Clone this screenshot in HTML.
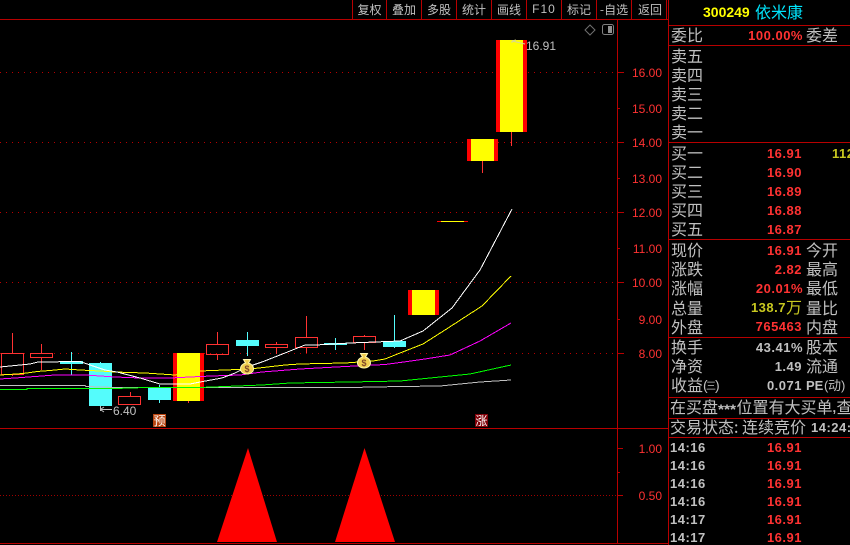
<!DOCTYPE html>
<html><head><meta charset="utf-8"><style>
html,body{margin:0;padding:0;background:#000;width:850px;height:545px;overflow:hidden}
svg{display:block}
text{font-family:"Liberation Sans","WenQuanYi Zen Hei",sans-serif;dominant-baseline:auto}
.c{font-family:"WenQuanYi Zen Hei","Noto Sans CJK SC",sans-serif;font-size:16px;fill:#c0c0c0}
.t{font-family:"WenQuanYi Zen Hei","Noto Sans CJK SC",sans-serif;font-size:12px;fill:#c0c0c0;text-anchor:middle}
.n{font-size:13px;font-weight:bold;letter-spacing:.5px;text-anchor:end;fill:#ff3232}
.g{font-size:13px;font-weight:bold;letter-spacing:.5px;fill:#c0c0c0}
.a{font-size:12px;fill:#ff3232;text-anchor:end}
.l{stroke:#b80000;stroke-width:1;shape-rendering:crispEdges}
.d{stroke:#b80000;stroke-width:1;stroke-dasharray:1 5;shape-rendering:crispEdges}
.d2{stroke:#a00000;stroke-width:1;stroke-dasharray:1 2;shape-rendering:crispEdges}
.h{fill:none;stroke:#ff3232;stroke-width:1;shape-rendering:crispEdges}
.w{stroke:#ff3232;stroke-width:1;shape-rendering:crispEdges}
.cy{fill:#54fcfc;shape-rendering:crispEdges}
.cw{stroke:#54fcfc;stroke-width:1;shape-rendering:crispEdges}
.ma{fill:none;stroke-width:1;shape-rendering:crispEdges}
</style></head><body>
<svg width="850" height="545" viewBox="0 0 850 545" xmlns="http://www.w3.org/2000/svg">
<rect width="850" height="545" fill="#000"/>
<!-- frame lines -->
<path class="l" d="M0 19.5H668M617.5 19V543.5M668.5 0V545M0 428.5H668M0 543.5H668M352.5 0V19M386.5 0V19M421.5 0V19M456.5 0V19M491.5 0V19M526.5 0V19M561.5 0V19M596.5 0V19M631.5 0V19M666.5 0V19"/>
<path class="l" d="M668 25.5H850M668 45.5H850M668 142.5H850M668 239.5H850M668 337.5H850M668 397.5H850M668 418.5H850M668 437.5H850"/>
<!-- toolbar -->
<text class="t" x="369.5" y="14">复权</text><text class="t" x="404" y="14">叠加</text><text class="t" x="439" y="14">多股</text><text class="t" x="474" y="14">统计</text><text class="t" x="509" y="14">画线</text>
<text x="544" y="13" text-anchor="middle" font-size="12" fill="#c0c0c0" letter-spacing="1">F10</text>
<text class="t" x="579" y="14">标记</text><text class="t" x="614" y="14">-自选</text><text class="t" x="650" y="14">返回</text>
<!-- icons -->
<path d="M590 25L595 30L590 35L585 30Z" fill="none" stroke="#707070"/>
<rect x="602.5" y="24.5" width="11" height="10" rx="2" fill="none" stroke="#808080"/><rect x="608" y="26" width="4" height="7" fill="#909090"/>
<!-- grid -->
<path class="d" d="M0 72.5H617M0 142.5H617M0 212.5H617M0 282.5H617M0 353.5H617"/>
<path class="d2" d="M0 495.5H617"/>
<path class="l" d="M617 72.5H624M617 108.5H620M617 142.5H624M617 178.5H620M617 212.5H624M617 248.5H620M617 282.5H624M617 319.5H620M617 353.5H624M617 448.5H623M617 472.5H620M617 495.5H623"/>
<!-- axis labels -->
<text class="a" x="662" y="77">16.00</text><text class="a" x="662" y="113">15.00</text><text class="a" x="662" y="147">14.00</text><text class="a" x="662" y="183">13.00</text><text class="a" x="662" y="217">12.00</text><text class="a" x="662" y="253">11.00</text><text class="a" x="662" y="287">10.00</text><text class="a" x="662" y="324">9.00</text><text class="a" x="662" y="358">8.00</text><text class="a" x="662" y="453">1.00</text><text class="a" x="662" y="500">0.50</text>
<!-- red hollow candles -->
<path class="w" d="M12.5 333V353M12.5 375V376M41.5 344V353M41.5 358V370M130.5 392V396M217.5 332V344M217.5 354V360M276.5 342V344M276.5 347V354M306.5 316V337M306.5 347V353M364.5 335V336M364.5 342V350"/>
<rect class="h" x="1.5" y="353.5" width="22" height="21"/><rect class="h" x="30.5" y="353.5" width="22" height="4"/><rect class="h" x="118.5" y="396.5" width="22" height="8"/><rect class="h" x="206.5" y="344.5" width="22" height="10"/><rect class="h" x="265.5" y="344.5" width="22" height="3"/><rect class="h" x="295.5" y="337.5" width="22" height="10"/><rect class="h" x="353.5" y="336.5" width="22" height="6"/>
<!-- cyan candles -->
<path class="cw" d="M71.5 352V375M100.5 362V407M159.5 385V403M247.5 332V356M335.5 338V350M394.5 315V348"/>
<rect class="cy" x="60" y="361" width="23" height="3"/><rect class="cy" x="89" y="363" width="23" height="43"/><rect class="cy" x="148" y="388" width="23" height="12"/><rect class="cy" x="236" y="340" width="23" height="6"/><rect class="cy" x="324" y="343" width="23" height="2"/><rect class="cy" x="383" y="341" width="23" height="6"/>
<!-- limit-up candles -->
<g shape-rendering="crispEdges">
<path class="w" d="M188.5 401V403M482.5 161V173M511.5 132V146"/>
<rect x="173" y="353" width="31" height="48" fill="#f00"/><rect x="177" y="353" width="23" height="48" fill="#ff0"/>
<rect x="408" y="290" width="31" height="25" fill="#f00"/><rect x="412" y="290" width="23" height="25" fill="#ff0"/>
<rect x="437" y="221" width="31" height="1" fill="#f00"/><rect x="441" y="221" width="23" height="1" fill="#ff0"/>
<rect x="467" y="139" width="31" height="22" fill="#f00"/><rect x="471" y="139" width="23" height="22" fill="#ff0"/>
<rect x="496" y="40" width="31" height="92" fill="#f00"/><rect x="500" y="40" width="23" height="92" fill="#ff0"/>
</g>
<!-- moving averages -->
<polyline class="ma" stroke="#c0c0c0" points="0,385.5 85,385.5 86,386.5 115,387.5 350,387.5 400,386.5 440,386 480,382 511,380"/>
<polyline class="ma" stroke="#00ff00" points="0,389.5 27,389.5 27,388.5 115,388.5 146,387.5 200,387.5 262,385 290,383 320,382.5 350,382 400,381 440,377 470,374 511,365"/>
<polyline class="ma" stroke="#ff00ff" points="0,379 15,378 35,376.5 55,375 85,375 115,377 140,378 170,378 200,376.5 225,375.5 240,375 262,372 300,369 345,366.5 385,364.5 400,362.5 425,359 450,355 480,341 511,323"/>
<polyline class="ma" stroke="#ffff00" points="0,375 17,374 27,373 37,371.5 50,370.5 65,369 80,370 100,371 115,372 145,373 175,375 200,371 225,370 250,369 285,365 300,364 320,363.5 345,363 373,361 385,359 400,353 423,344 445,330 482,306 511,276"/>
<polyline class="ma" stroke="#ffffff" points="0,367 10,366 20,365 30,364 38,362 80,361.5 90,365 105,370 117,372 140,378 160,384 190,384 200,382 222,378 235,373 247,367 262,362 285,353 305,345 316,345 350,343 400,341 423,331 452,308 480,270 512,209"/>
<!-- money bags -->
<path d="M243.5 359.5h7l-2 3.5c3 1 5 3 5 6 0 3-3 5-6.500 5s-6.500-2-6.500-5c0-3 2-5 5-6z" fill="#f0d050" stroke="#fff8b0" stroke-width="1"/>
<text x="247" y="372" font-size="9" font-weight="bold" text-anchor="middle" fill="#804828">$</text>
<path d="M360.500 353.500h7l-2 3.500c3 1 5 3 5 6 0 3-3 5-6.500 5s-6.500-2-6.500-5c0-3 2-5 5-6z" fill="#f0d050" stroke="#fff8b0" stroke-width="1"/>
<text x="364" y="366" font-size="9" font-weight="bold" text-anchor="middle" fill="#804828">$</text>
<!-- markers -->
<path d="M100.500 406V411M101 409.500H112M101 409l3-2M101 410l3 2" stroke="#c0c0c0" fill="none" stroke-width="1"/>
<text x="113" y="415" font-size="12" fill="#c0c0c0">6.40</text>
<path d="M512 41L525 44M512 41V43M512 41L516 40" stroke="#d8d890" fill="none" stroke-width="1"/>
<text x="526" y="50" font-size="12" fill="#c0c0c0">16.91</text>
<rect x="153" y="414" width="13" height="13" fill="#b8440f"/>
<text x="159.500" y="425" font-family="WenQuanYi Zen Hei,Noto Sans CJK SC,sans-serif" font-size="12" text-anchor="middle" fill="#fff">预</text>
<rect x="475" y="414" width="13" height="13" fill="#800008"/>
<text x="481.500" y="425" font-family="WenQuanYi Zen Hei,Noto Sans CJK SC,sans-serif" font-size="12" text-anchor="middle" fill="#fff">涨</text>
<!-- triangles -->
<path d="M248 448L277 542H217Z" fill="#f00"/>
<path d="M364.500 448L395 542H335Z" fill="#f00"/>
<!-- right header -->
<text x="703" y="17" font-size="14" font-weight="bold" fill="#ffff00">300249</text>
<text x="755" y="18" class="c" style="fill:#00e4fc">依米康</text>
<!-- labels -->
<text class="c" x="671" y="41">委比</text><text class="c" x="806" y="41">委差</text>
<text class="c" x="671" y="62">卖五</text><text class="c" x="671" y="81">卖四</text><text class="c" x="671" y="100">卖三</text><text class="c" x="671" y="119">卖二</text><text class="c" x="671" y="138">卖一</text>
<text class="c" x="671" y="159">买一</text><text class="c" x="671" y="178">买二</text><text class="c" x="671" y="197">买三</text><text class="c" x="671" y="216">买四</text><text class="c" x="671" y="235">买五</text>
<text class="c" x="671" y="256">现价</text><text class="c" x="671" y="275">涨跌</text><text class="c" x="671" y="294">涨幅</text><text class="c" x="671" y="314">总量</text><text class="c" x="671" y="333">外盘</text>
<text class="c" x="806" y="256">今开</text><text class="c" x="806" y="275">最高</text><text class="c" x="806" y="294">最低</text><text class="c" x="806" y="314">量比</text><text class="c" x="806" y="333">内盘</text>
<text class="c" x="671" y="353">换手</text><text class="c" x="671" y="372">净资</text><text class="c" x="671" y="391">收益</text>
<text x="703" y="390" font-size="14" fill="#c0c0c0" font-family="Liberation Sans,sans-serif">(</text><text x="706" y="389.500" class="t" style="font-size:10px;text-anchor:start">三</text><text x="715" y="390" font-size="14" fill="#c0c0c0" font-family="Liberation Sans,sans-serif">)</text>
<text class="c" x="806" y="353">股本</text><text class="c" x="806" y="372">流通</text>
<text class="g" x="806" y="390" style="letter-spacing:0">PE</text>
<text x="824" y="390" font-size="13" fill="#c0c0c0">(</text><text x="828" y="390" class="t" style="font-size:13px;text-anchor:start">动</text><text x="841" y="390" font-size="13" fill="#c0c0c0">)</text>
<text class="c" x="670" y="413">在买盘</text>
<text x="718" y="414" font-size="14" font-weight="bold" fill="#c0c0c0" textLength="18" lengthAdjust="spacingAndGlyphs">***</text>
<text class="c" x="736.500" y="413">位置有大买单</text>
<text x="832.500" y="412" font-size="13" font-weight="bold" fill="#c0c0c0">,</text>
<text class="c" x="836.500" y="413">查</text>
<text class="c" x="670" y="433">交易状态: 连续竞价</text>
<text class="g" x="811" y="432">14:24:</text>
<!-- numbers -->
<text class="n" x="803" y="40">100.00%</text>
<text class="n" x="802" y="158">16.91</text><text class="n" x="802" y="177">16.90</text><text class="n" x="802" y="196">16.89</text><text class="n" x="802" y="215">16.88</text><text class="n" x="802" y="234">16.87</text>
<text class="n" x="832" y="158" style="text-anchor:start;fill:#c8c820">112</text>
<text class="n" x="802" y="255">16.91</text><text class="n" x="802" y="274">2.82</text><text class="n" x="803" y="293">20.01%</text>
<text class="n" x="786" y="312" style="fill:#c8c820">138.7</text><text class="c" x="786" y="313" style="fill:#c8c820">万</text>
<text class="n" x="802" y="331">765463</text>
<text class="n" x="803" y="352" style="fill:#c0c0c0">43.41%</text><text class="n" x="802" y="371" style="fill:#c0c0c0">1.49</text><text class="n" x="802" y="390" style="fill:#c0c0c0">0.071</text>
<!-- ticks -->
<text class="g" x="670" y="452">14:16</text><text class="g" x="670" y="470">14:16</text><text class="g" x="670" y="488">14:16</text><text class="g" x="670" y="506">14:16</text><text class="g" x="670" y="524">14:17</text><text class="g" x="670" y="542">14:17</text>
<text class="n" x="802" y="452">16.91</text><text class="n" x="802" y="470">16.91</text><text class="n" x="802" y="488">16.91</text><text class="n" x="802" y="506">16.91</text><text class="n" x="802" y="524">16.91</text><text class="n" x="802" y="542">16.91</text>
</svg>
</body></html>
